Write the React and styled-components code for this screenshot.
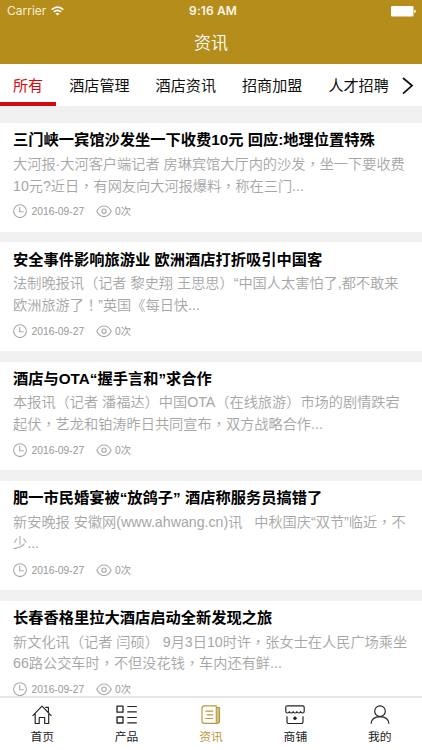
import React from "react";
import styled, { createGlobalStyle } from "styled-components";

const GOLD = "#b58d1b";

const GlobalStyle = createGlobalStyle`
  * { box-sizing: border-box; }
  body {
    margin: 0;
    background: #f0f0f0;
    font-family: "Liberation Sans", "Noto Sans CJK SC", sans-serif;
  }
`;

const Screen = styled.div`
  width: 422px;
  height: 750px;
  overflow: hidden;
  display: flex;
  flex-direction: column;
  background: #f0f0f0;
`;

const Header = styled.header`
  flex: none;
  height: 64px;
  background: ${GOLD};
  color: #fff;
`;

const StatusBar = styled.div`
  display: grid;
  grid-template-columns: 1fr auto 1fr;
  align-items: center;
  height: 22px;
  padding: 0 6px 0 7px;
  font: 12px/22px Inter, sans-serif;
`;

const Carrier = styled.div`
  display: flex;
  align-items: center;
  gap: 5px;
  color: #f6eed8;
`;

const Clock = styled.span`
  padding-left: 3px;
  font-weight: 600;
  letter-spacing: 0.1px;
  color: #fbf6e8;
`;

const Battery = styled.svg`
  justify-self: end;
`;

const PageTitle = styled.h1`
  margin: 0;
  font-size: 17px;
  font-weight: 350;
  line-height: 43px;
  text-align: center;
`;

const Tabs = styled.nav`
  flex: none;
  display: flex;
  height: 42px;
  background: #fff;
  font-size: 15.1px;
  color: #111;
`;

const Tab = styled.div`
  flex: none;
  padding: 0 13px;
  line-height: 43px;
  white-space: nowrap;
  color: ${(p) => (p.$active ? "#d3090d" : "inherit")};
  box-shadow: ${(p) => (p.$active ? "inset 0 -4px #d3090d" : "none")};
`;

const MoreTabs = styled.svg`
  flex: none;
  margin: 13px 0 0;
`;

const List = styled.main`
  flex: 1;
  min-height: 0;
  overflow: hidden;
  padding-top: 17px;
`;

const Card = styled.article`
  height: 108.6px;
  margin-bottom: 10.8px;
  padding: 5.3px 13px 0;
  background: #fff;
`;

const Headline = styled.h2`
  margin: 0;
  font-size: 15.25px;
  font-weight: 700;
  line-height: 23px;
  white-space: nowrap;
  color: #000;
`;

const Summary = styled.p`
  margin: 2px 0 0;
  font-size: 14.2px;
  font-weight: 350;
  line-height: 21.3px;
  color: #a6a6a6;
`;

const SummaryLine = styled.span`
  display: block;
  height: 21.3px;
  white-space: pre;
`;

const Centred = styled.span`
  font-family: "Noto Sans CJK TC", sans-serif;
`;

const Meta = styled.div`
  display: flex;
  align-items: center;
  height: 16px;
  margin-top: 8px;
  font-size: 10.3px;
  font-weight: 400;
  color: #999;
`;

const MetaText = styled.span`
  width: ${(p) => (p.$wide ? "64px" : "auto")};
  margin-left: 3.5px;
  line-height: 16px;
  padding-top: 1px;
`;

const TabBar = styled.footer`
  flex: none;
  display: grid;
  grid-template-columns: repeat(5, 1fr);
  height: 54px;
  border-top: 2px solid #e6e6e6;
  background: #fff;
`;

const TabItem = styled.div`
  display: flex;
  flex-direction: column;
  align-items: center;
  padding-top: 7px;
  font-size: 11.8px;
  line-height: 18px;
  color: ${(p) => (p.$active ? "#bd9738" : "#222")};
  svg { display: block; margin-bottom: 4px; }
`;

const line = { fill: "none", stroke: "currentColor" };

const ClockIcon = () => (
  <svg width="15" height="15" viewBox="0 0 15 15" {...line} stroke="#aaa" strokeWidth="1.1">
    <circle cx="7" cy="7.2" r="6.4" />
    <path d="M6.7 3v4.8h4" />
  </svg>
);

const EyeIcon = () => (
  <svg width="16" height="15" viewBox="0 0 16 15" {...line} stroke="#aaa" strokeWidth="1.1">
    <path d="M.8 7.3Q3.4 2 8 2t7.2 5.3Q12.6 12.6 8 12.6T.8 7.3Z" />
    <circle cx="8" cy="7.2" r="2.2" />
  </svg>
);

const icons = {
  home: (
    <path d="M.6 10.8 10 1.2l9.4 9.6M3.2 8.9v9.6h4v-6h5.5v6h4V8.9M13.2 2.3h3.2v5.1" />
  ),
  grid: (
    <>
      <path d="M1 1.2h6v6H1zM1 12h6v6H1z" strokeWidth="1.3" />
      <path d="M11.3 1.5h9.5M11.3 6.8h9.5M11.3 12.5h9.5M11.3 17.8h9.5" />
    </>
  ),
  news: (
    <>
      <path d="M3.3.9h12v17.5H3.2A2.3 2.3 0 0 1 1 16.1V3.2Q1 .9 3.3.9Z" />
      <path d="M15.3 2.5h3.2V16q0 2.4-2.5 2.4h-.7M17 2.7v15.2M4.4 6.1h7.8M5.8 9.8h6.4M4.4 13.5h7.8" />
    </>
  ),
  shop: (
    <>
      <path d="M2.4.8h15.2q1.6 0 1.6 1.6v4.1c0 2-3.6 2-3.6 0 0 2-3.7 2-3.7 0 0 2-3.8 2-3.8 0 0 2-3.7 2-3.7 0 0 2-3.6 2-3.6 0V2.4Q.8.8 2.4.8ZM2 11.2v5.5q0 1.9 1.9 1.9h12.2q1.9 0 1.9-1.9v-5.5" />
      <circle cx="10" cy="13.2" r="1.7" fill="currentColor" stroke="none" />
    </>
  ),
  user: (
    <>
      <circle cx="10" cy="6.2" r="5.3" />
      <path d="M.9 18.8q.8-7 9.1-7.2 8.3.2 9.1 7.2" />
    </>
  ),
};

const NavIcon = ({ name }) => (
  <svg
    width={name === "grid" ? 22 : 20}
    height="19"
    viewBox={name === "grid" ? "0 0 22 19" : "0 0 20 19"}
    {...line}
    strokeWidth="1.15"
    strokeLinejoin="round"
  >
    {icons[name]}
  </svg>
);

const categories = ["所有", "酒店管理", "酒店资讯", "招商加盟", "人才招聘"];

const articles = [
  {
    title: "三门峡一宾馆沙发坐一下收费10元 回应:地理位置特殊",
    lines: ["大河报·大河客户端记者 房琳宾馆大厅内的沙发，坐一下要收费", "10元?近日，有网友向大河报爆料，称在三门..."],
  },
  {
    title: "安全事件影响旅游业 欧洲酒店打折吸引中国客",
    lines: ["法制晚报讯（记者 黎史翔 王思思）“中国人太害怕了,都不敢来", "欧洲旅游了！”英国《每日快..."],
  },
  {
    title: "酒店与OTA“握手言和”求合作",
    lines: ["本报讯（记者 潘福达）中国OTA（在线旅游）市场的剧情跌宕", "起伏，艺龙和铂涛昨日共同宣布，双方战略合作..."],
  },
  {
    title: "肥一市民婚宴被“放鸽子” 酒店称服务员搞错了",
    lines: ["新安晚报 安徽网(www.ahwang.cn)讯   中秋国庆“双节”临近，不", "少..."],
  },
  {
    title: "长春香格里拉大酒店启动全新发现之旅",
    lines: ["新文化讯（记者 闫硕） 9月3日10时许，张女士在人民广场乘坐", "66路公交车时，不但没花钱，车内还有鲜..."],
  },
];

const navItems = [
  ["home", "首页"],
  ["grid", "产品"],
  ["news", "资讯"],
  ["shop", "商铺"],
  ["user", "我的"],
];

const withCentredMarks = (text) =>
  text.split(/([，！])/).map((part, i) => (i % 2 ? <Centred key={i}>{part}</Centred> : part));

export default function App() {
  return (
    <Screen>
      <GlobalStyle />
      <Header>
        <StatusBar>
          <Carrier>
            Carrier
            <svg width="13" height="10" viewBox="0 0 13 10" fill="none" stroke="#fff" strokeWidth="1.6">
              <path d="M.7 3.6q5.8-5 11.6 0M2.8 5.9q3.7-3 7.4 0" />
              <path d="M4.5 7.6q2-1.5 4 0l-2 2Z" fill="#fff" stroke="none" />
            </svg>
          </Carrier>
          <Clock>9:16 AM</Clock>
          <Battery width="25" height="11" viewBox="0 0 25 11" fill="#fff">
            <rect width="22.5" height="10.5" rx="1.3" />
            <path d="M23.3 3.5q1.5.3 1.5 1.8t-1.5 1.8Z" />
          </Battery>
        </StatusBar>
        <PageTitle>资讯</PageTitle>
      </Header>
      <Tabs>
        {categories.map((name, i) => (
          <Tab key={name} $active={i === 0}>{name}</Tab>
        ))}
        <MoreTabs width="12" height="18" viewBox="0 0 12 18" fill="none" stroke="#111" strokeWidth="1.8">
          <path d="m1 1 9 7.6-9 8" />
        </MoreTabs>
      </Tabs>
      <List>
        {articles.map((a) => (
          <Card key={a.title}>
            <Headline>{a.title}</Headline>
            <Summary>
              {a.lines.map((text) => (
                <SummaryLine key={text}>{withCentredMarks(text)}</SummaryLine>
              ))}
            </Summary>
            <Meta>
              <ClockIcon />
              <MetaText $wide>2016-09-27</MetaText>
              <EyeIcon />
              <MetaText>0次</MetaText>
            </Meta>
          </Card>
        ))}
      </List>
      <TabBar>
        {navItems.map(([icon, label]) => (
          <TabItem key={icon} $active={icon === "news"}>
            <NavIcon name={icon} />
            {label}
          </TabItem>
        ))}
      </TabBar>
    </Screen>
  );
}
